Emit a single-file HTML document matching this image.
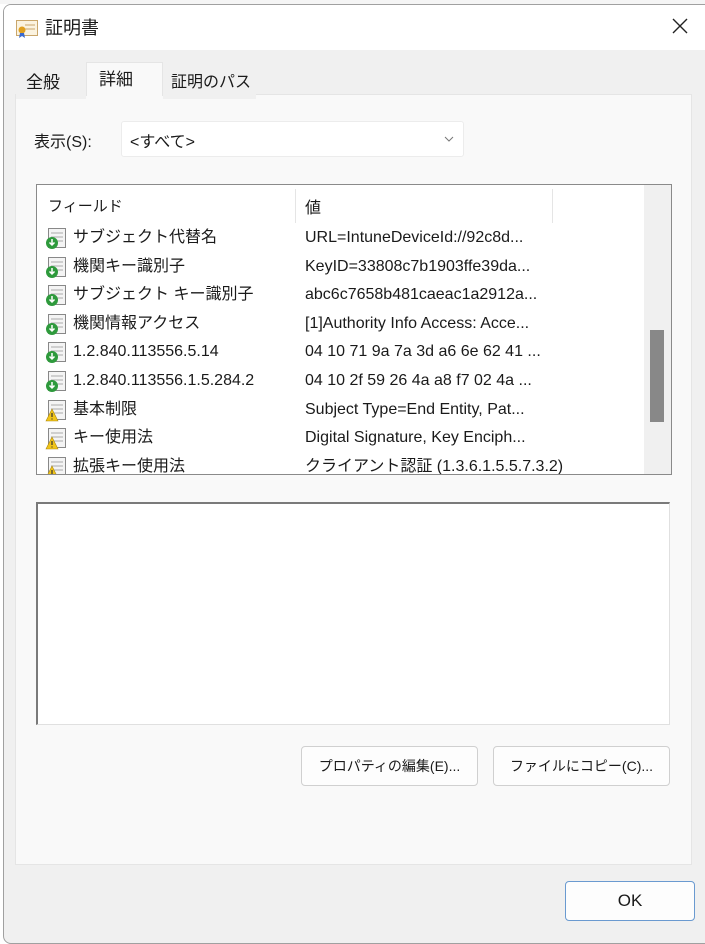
<!DOCTYPE html>
<html><head><meta charset="utf-8"><style>
*{box-sizing:border-box;margin:0;padding:0}
body{width:705px;height:933px;overflow:hidden;background:#fff;font-family:"Liberation Sans","Noto Sans CJK JP",sans-serif;color:#1a1a1a;position:relative}
.abs{position:absolute}
.win{left:3px;top:4px;width:710px;height:940px;background:#f0f0f0;border:1px solid #a0a0a0;border-radius:8px;overflow:hidden}
.title{left:0;top:0;right:0;height:45px;background:#fff}
.panel{left:15px;top:94px;width:677px;height:771px;background:#f9f9f9;border:1px solid #e5e5e5}
.tab{top:62px;height:33px;font-size:17px;padding-top:2px}
.btn{background:#fdfdfd;border:1px solid #d0d0d0;border-radius:4px;font-size:14px;text-align:center;line-height:38px}
.r{position:absolute;left:0;height:28px;width:600px;font-size:16px;line-height:28px;white-space:nowrap}
.r .n{position:absolute;left:37px}.r .v{position:absolute;left:269px}
.r svg{position:absolute;left:9px;top:4px}
</style></head><body>
<div class="abs" style="left:0;top:0;width:705px;height:4px;background:#f5f5f5"></div>
<div class="abs win">
 <div class="abs title"></div>
</div>
<svg class="abs" style="left:16px;top:20px" width="22" height="18" viewBox="0 0 22 18"><rect x="0.5" y="0.5" width="21" height="15" fill="#fbf3e0" stroke="#c9a66b"/><line x1="9" y1="5" x2="19" y2="5" stroke="#c9a66b"/><line x1="9" y1="9" x2="19" y2="9" stroke="#c9a66b"/><circle cx="6" cy="10" r="3.5" fill="#e0a020"/><path d="M4 13l-1 5 3-2 3 2-1-5z" fill="#3a6ad0"/></svg>
<div class="abs" style="left:45px;top:14px;font-size:18px">証明書</div>
<svg class="abs" style="left:671px;top:17px" width="18" height="18"><path d="M2 2L16 16M16 2L2 16" stroke="#222" stroke-width="1.4"/></svg>
<div class="abs panel"></div>
<div class="abs tab" style="left:16px;width:70px;background:#f0f0f0;padding-left:10px;top:66px">全般</div>
<div class="abs tab" style="left:86px;width:77px;height:34px;background:#f9f9f9;border:1px solid #e5e5e5;border-bottom:none;padding-left:12px">詳細</div>
<div class="abs tab" style="left:163px;width:93px;background:#f0f0f0;padding-left:8px;top:66px;font-size:16px">証明のパス</div>
<div class="abs" style="left:34px;top:128px;font-size:16px">表示(S):</div>
<div class="abs" style="left:121px;top:121px;width:343px;height:36px;background:#fff;border:1px solid #ececec;border-radius:3px;font-size:16px;padding:6px 8px">&lt;すべて&gt;</div>
<svg class="abs" style="left:444px;top:136px" width="10" height="7"><path d="M1 1L5 5L9 1" stroke="#777" fill="none"/></svg>
<div class="abs" style="left:36px;top:184px;width:636px;height:291px;background:#fff;border:1px solid #8a8a8a;overflow:hidden">
 <div class="abs" style="left:258px;top:4px;width:1px;height:34px;background:#e5e5e5"></div>
 <div class="abs" style="left:515px;top:4px;width:1px;height:34px;background:#e5e5e5"></div>
 <div class="abs" style="left:607px;top:0;width:27px;height:291px;background:#f0f0f0"></div>
 <div class="abs" style="left:613px;top:145px;width:14px;height:92px;background:#888"></div>
 <div class="abs" style="left:11px;top:10px;font-size:15px">フィールド</div>
 <div class="abs" style="left:268px;top:9px;font-size:16px">値</div>
</div>
<div class="abs" style="left:36px;top:224px;width:600px;height:250px;overflow:hidden">
<div class="r" style="top:0"><svg width="22" height="22"><rect x="3.5" y="0.5" width="17" height="19" fill="#f4f4f4" stroke="#888"/><path d="M6 5h12M6 9h12M6 13h12" stroke="#aaa"/><circle cx="7" cy="15" r="6" fill="#2e9a3c"/><path d="M7 11v6M4.5 14.5L7 17l2.5-2.5" stroke="#fff" fill="none" stroke-width="1.5"/></svg><span class="n">サブジェクト代替名</span><span class="v">URL=IntuneDeviceId://92c8d...</span></div>
<div class="r" style="top:28.6px"><svg width="22" height="22"><rect x="3.5" y="0.5" width="17" height="19" fill="#f4f4f4" stroke="#888"/><path d="M6 5h12M6 9h12M6 13h12" stroke="#aaa"/><circle cx="7" cy="15" r="6" fill="#2e9a3c"/><path d="M7 11v6M4.5 14.5L7 17l2.5-2.5" stroke="#fff" fill="none" stroke-width="1.5"/></svg><span class="n">機関キー識別子</span><span class="v">KeyID=33808c7b1903ffe39da...</span></div>
<div class="r" style="top:57.2px"><svg width="22" height="22"><rect x="3.5" y="0.5" width="17" height="19" fill="#f4f4f4" stroke="#888"/><path d="M6 5h12M6 9h12M6 13h12" stroke="#aaa"/><circle cx="7" cy="15" r="6" fill="#2e9a3c"/><path d="M7 11v6M4.5 14.5L7 17l2.5-2.5" stroke="#fff" fill="none" stroke-width="1.5"/></svg><span class="n">サブジェクト キー識別子</span><span class="v">abc6c7658b481caeac1a2912a...</span></div>
<div class="r" style="top:85.8px"><svg width="22" height="22"><rect x="3.5" y="0.5" width="17" height="19" fill="#f4f4f4" stroke="#888"/><path d="M6 5h12M6 9h12M6 13h12" stroke="#aaa"/><circle cx="7" cy="15" r="6" fill="#2e9a3c"/><path d="M7 11v6M4.5 14.5L7 17l2.5-2.5" stroke="#fff" fill="none" stroke-width="1.5"/></svg><span class="n">機関情報アクセス</span><span class="v">[1]Authority Info Access: Acce...</span></div>
<div class="r" style="top:114.4px"><svg width="22" height="22"><rect x="3.5" y="0.5" width="17" height="19" fill="#f4f4f4" stroke="#888"/><path d="M6 5h12M6 9h12M6 13h12" stroke="#aaa"/><circle cx="7" cy="15" r="6" fill="#2e9a3c"/><path d="M7 11v6M4.5 14.5L7 17l2.5-2.5" stroke="#fff" fill="none" stroke-width="1.5"/></svg><span class="n">1.2.840.113556.5.14</span><span class="v">04 10 71 9a 7a 3d a6 6e 62 41 ...</span></div>
<div class="r" style="top:143px"><svg width="22" height="22"><rect x="3.5" y="0.5" width="17" height="19" fill="#f4f4f4" stroke="#888"/><path d="M6 5h12M6 9h12M6 13h12" stroke="#aaa"/><circle cx="7" cy="15" r="6" fill="#2e9a3c"/><path d="M7 11v6M4.5 14.5L7 17l2.5-2.5" stroke="#fff" fill="none" stroke-width="1.5"/></svg><span class="n">1.2.840.113556.1.5.284.2</span><span class="v">04 10 2f 59 26 4a a8 f7 02 4a ...</span></div>
<div class="r" style="top:171.6px"><svg width="22" height="22"><rect x="3.5" y="0.5" width="17" height="19" fill="#f4f4f4" stroke="#888"/><path d="M6 5h12M6 9h12M6 13h12" stroke="#aaa"/><path d="M7 9L13 21H1z" fill="#f0c419" stroke="#b08a10" stroke-width=".6"/><path d="M7 13v4M7 18.5v1" stroke="#333" stroke-width="1.2"/></svg><span class="n">基本制限</span><span class="v">Subject Type=End Entity, Pat...</span></div>
<div class="r" style="top:200.2px"><svg width="22" height="22"><rect x="3.5" y="0.5" width="17" height="19" fill="#f4f4f4" stroke="#888"/><path d="M6 5h12M6 9h12M6 13h12" stroke="#aaa"/><path d="M7 9L13 21H1z" fill="#f0c419" stroke="#b08a10" stroke-width=".6"/><path d="M7 13v4M7 18.5v1" stroke="#333" stroke-width="1.2"/></svg><span class="n">キー使用法</span><span class="v">Digital Signature, Key Enciph...</span></div>
<div class="r" style="top:228.8px"><svg width="22" height="22"><rect x="3.5" y="0.5" width="17" height="19" fill="#f4f4f4" stroke="#888"/><path d="M6 5h12M6 9h12M6 13h12" stroke="#aaa"/><path d="M7 9L13 21H1z" fill="#f0c419" stroke="#b08a10" stroke-width=".6"/><path d="M7 13v4M7 18.5v1" stroke="#333" stroke-width="1.2"/></svg><span class="n">拡張キー使用法</span><span class="v">クライアント認証 (1.3.6.1.5.5.7.3.2)</span></div>
</div>
<div class="abs" style="left:36px;top:502px;width:634px;height:223px;background:#fff;border:1px solid #e0e0e0;border-top:2px solid #7a7a7a;border-left:2px solid #7a7a7a"></div>
<div class="abs btn" style="left:301px;top:746px;width:177px;height:40px">プロパティの編集(E)...</div>
<div class="abs btn" style="left:493px;top:746px;width:177px;height:40px">ファイルにコピー(C)...</div>
<div class="abs btn" style="left:565px;top:881px;width:130px;height:40px;border:1px solid #6a9ad0;font-size:17px">OK</div>
</body></html>
